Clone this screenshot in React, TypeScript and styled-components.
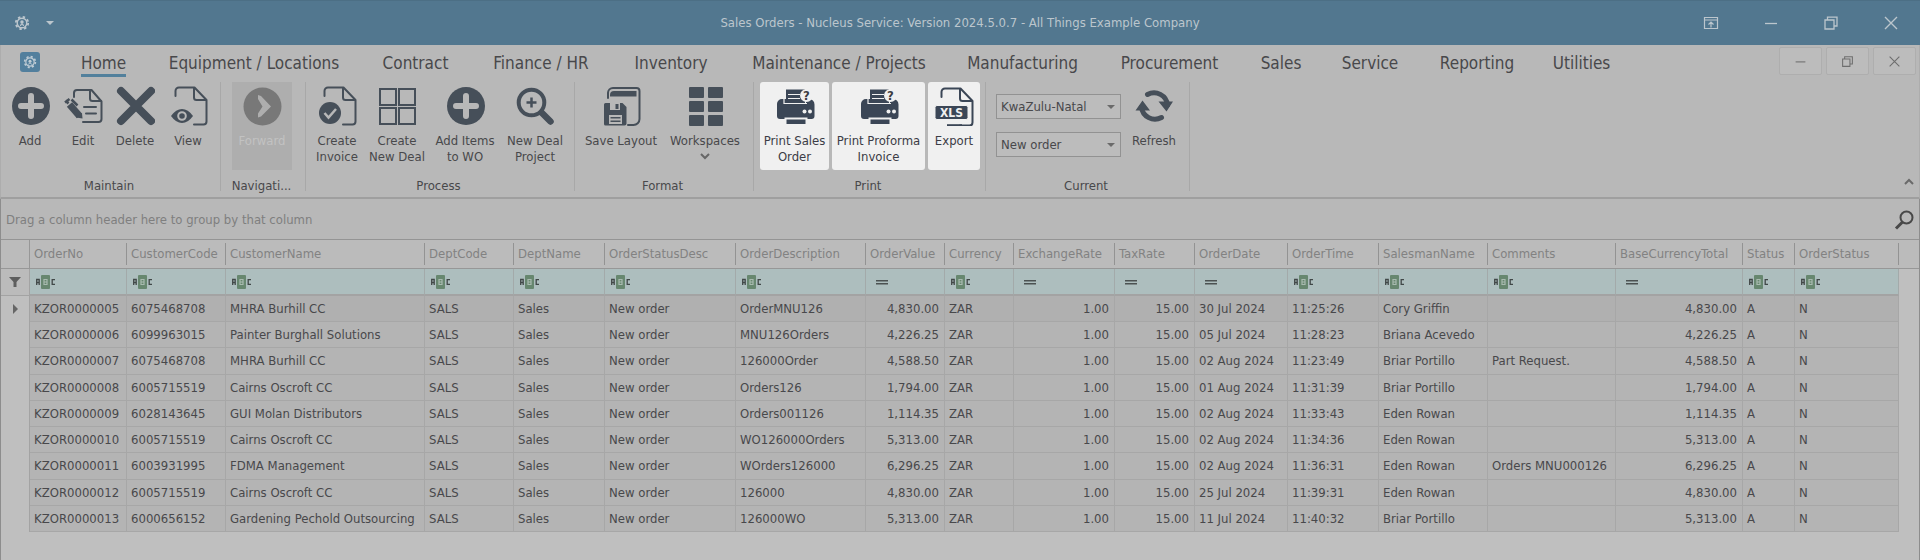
import React from "react";
import styled, { createGlobalStyle, css } from "styled-components";

const INK = "#464f59";
const INK_BRIGHT = "#3b4656";

const GlobalStyle = createGlobalStyle`
  * { box-sizing: border-box; }
  body {
    margin: 0;
    background: #b8b8b8;
    color: #48484b;
    font-family: "DejaVu Sans Condensed", "DejaVu Sans", sans-serif;
    font-size: 13px;
    line-height: 16px;
  }
  button, select, input { font: inherit; color: inherit; }
  button { background: none; border: 0; padding: 0; }
  svg { display: block; flex: none; }
`;

const Window = styled.div`
  min-height: 100vh;
  display: flex;
  flex-direction: column;
`;

/* ---------- title bar ---------- */

const TitleBar = styled.header`
  display: grid;
  grid-template-columns: 1fr auto 1fr;
  align-items: center;
  height: 45px;
  padding: 0 1px;
  background: #52778f;
  border-top: 1px solid #4c6f85;
  color: #bcc6cd;
`;

const QuickAccess = styled.div`
  display: flex;
  align-items: center;
  gap: 16px;
  padding-left: 13px;
`;

const WindowTitle = styled.h1`
  margin: 0;
  font-size: 13px;
  font-weight: 400;
`;

const WindowControls = styled.div`
  display: flex;
  justify-content: flex-end;
  gap: 4px;
`;

const CaptionButton = styled.button`
  display: grid;
  place-items: center;
  width: 56px;
  height: 44px;
`;

const PlainButton = styled.button`
  display: grid;
  place-items: center;
`;

/* ---------- ribbon ---------- */

const Ribbon = styled.section`
  border-left: 1px solid #adadad;
  border-right: 1px solid #adadad;
  border-bottom: 2px solid #9f9f9f;
`;

const TabStrip = styled.nav`
  display: flex;
  align-items: flex-start;
  height: 36px;
  padding: 2px 3px 0 19px;
`;

const AppButton = styled.button`
  display: grid;
  place-items: center;
  width: 20px;
  height: 20px;
  margin: 5px 20px 0 0;
  border-radius: 3px;
  background: #527f9d;
  color: #bfccd5;
`;

const Tab = styled.a<{ $width: number; $active?: boolean }>`
  display: flex;
  justify-content: center;
  width: ${(p) => p.$width}px;
  color: inherit;
  text-decoration: none;
  font-size: 17px;
  line-height: 20px;
  white-space: nowrap;
  padding-top: 6px;

  span {
    padding-bottom: 1px;
    border-bottom: 3px solid ${(p) => (p.$active ? "#52809c" : "transparent")};
  }
`;

const ChildControls = styled.div`
  display: flex;
  gap: 4px;
  margin-left: auto;
`;

const ChildButton = styled.button`
  display: grid;
  place-items: center;
  width: 43px;
  height: 28px;
  background: #bcbcbc;
  border: 1px solid #aeaeae;
  border-radius: 2px;
  color: #6e6e6e;
`;

const Groups = styled.div`
  display: flex;
  height: 116px;
`;

const Group = styled.section<{ $width: number }>`
  display: flex;
  flex-direction: column;
  justify-content: space-between;
  width: ${(p) => p.$width}px;
  height: 109px;
  margin-top: 1px;
  border-right: 1px solid #a8a8a8;
`;

const GroupItems = styled.div<{ $gap?: number; $inset?: number }>`
  display: flex;
  gap: ${(p) => p.$gap ?? 0}px;
  height: 90px;
  padding-left: ${(p) => p.$inset ?? 2}px;
`;

const GroupCaption = styled.h2`
  margin: 0 0 -4px;
  padding-right: 3px;
  font-size: 13px;
  font-weight: 400;
  line-height: 18px;
  text-align: center;
`;

const ToolButton = styled.button<{ $width: number; $tone?: "lit" | "off" }>`
  display: flex;
  flex-direction: column;
  align-items: center;
  gap: 7px;
  width: ${(p) => p.$width}px;
  height: 88px;
  padding-top: 4px;
  border-radius: 3px;
  color: #48484b;
  white-space: nowrap;

  svg { color: ${INK}; }

  ${(p) =>
    p.$tone === "lit" &&
    css`
      background: #f0f0f0;
      color: #3c3c46;
      svg { color: ${INK_BRIGHT}; }
    `}
  ${(p) =>
    p.$tone === "off" &&
    css`
      background: #aeaeae;
      border-radius: 0;
      color: #c2c2c2;
      svg { color: #787878; }
    `}
`;

const ToolLabel = styled.span`
  display: block;
  text-align: center;
  white-space: pre-line;

  svg { margin: 4px auto 0; color: #666; }
`;

const ComboStack = styled.div`
  display: flex;
  flex-direction: column;
  gap: 13px;
  width: 125px;
  padding-top: 12px;
`;

const ComboBox = styled.label`
  position: relative;
  display: block;

  select {
    appearance: none;
    width: 100%;
    height: 25px;
    padding: 1px 20px 0 4px;
    background: #bcbcbc;
    border: 1px solid #929292;
    border-radius: 0;
  }

  svg {
    position: absolute;
    right: 6px;
    top: 11px;
    color: #6a6a6a;
    pointer-events: none;
  }
`;

const CollapseButton = styled.button`
  align-self: flex-end;
  margin: 0 5px 12px auto;
  color: #6a6a6a;
`;

/* ---------- grid ---------- */

const GridPane = styled.main`
  flex: 1;
  border-left: 1px solid #8d8d8d;
  border-right: 1px solid #8d8d8d;
  display: flex;
  flex-direction: column;
  background: #bfbfbf;
`;

const GroupPanel = styled.div`
  display: flex;
  align-items: center;
  justify-content: space-between;
  height: 41px;
  padding: 1px 5px 0;
  background: #b8b8b8;
  border-bottom: 1px solid #949494;
  color: #7f7f7f;
`;

const OrdersTable = styled.table`
  width: 100%;
  table-layout: fixed;
  border-collapse: separate;
  border-spacing: 0;
`;

const HeadRow = styled.tr`
  height: 29px;
  background: #bbbbbb;
  color: #828282;
`;

const HeadCell = styled.th`
  padding: 0;
  border-bottom: 1px solid #979797;
  font-weight: 400;
  text-align: left;
  white-space: nowrap;

  span {
    display: block;
    height: 22px;
    padding-left: 4px;
    border-right: 1px solid #939393;
    line-height: 22px;
  }
`;

const CornerCell = styled.td`
  padding: 0;
  border-right: 1px solid #979797;
  border-bottom: 1px solid #979797;
`;

const FillerCell = styled.td<{ $line?: boolean }>`
  padding: 0;
  background: #bfbfbf;
  ${(p) => p.$line && "background: #bbbbbb; border-bottom: 1px solid #979797;"}
`;

const FilterRow = styled.tr`
  height: 27px;
  background: #adbebe;
`;

const FilterCell = styled.td`
  padding: 0;
  border-right: 1px solid #a3aaaa;
  border-bottom: 2px solid #a3a3a3;
`;

const FilterBox = styled.label`
  display: flex;
  align-items: center;
  gap: 4px;
  padding-left: 5px;

  input {
    flex: 1;
    min-width: 0;
    height: 18px;
    padding: 0;
    background: transparent;
    border: 0;
    outline: 0;
  }
`;

const IndicatorCell = styled.td`
  padding: 0;
  background: #bfbfbf;
  border-right: 1px solid #a3a3a3;

  svg { margin: 0 auto; }

  ${FilterRow} & {
    background: #bbbbbb;
    border-bottom: 1px solid #a3a3a3;
  }
`;

const DataRow = styled.tr`
  height: 26px;

  &:nth-child(4n + 3) { height: 27px; }
  &:first-child td:not(:first-child):not(:last-child) { background: #b0b0b0; }
`;

const DataCell = styled.td<{ $right?: boolean }>`
  padding: 0 5px 0 4px;
  background: #b4b4b4;
  border-right: 1px solid #a7a7a7;
  border-bottom: 1px solid #a7a7a7;
  text-align: ${(p) => (p.$right ? "right" : "left")};
  white-space: nowrap;
`;

/* ---------- icons ---------- */

const Icon = ({ children, size = 40 }: { children: React.ReactNode; size?: number }) => (
  <svg width={size} height={size} viewBox={`0 0 ${size} ${size}`} fill="none" aria-hidden="true">
    {children}
  </svg>
);

const line = {
  stroke: "currentColor",
  strokeWidth: 2,
  strokeLinecap: "round" as const,
  strokeLinejoin: "round" as const,
};

const PageOutline = () => (
  <g {...line}>
    <path d="M7.500 10V5a3.500 3.500 0 0 1 3.500-3.500h15.500L38.500 14v21.500a3 3 0 0 1-3 3H26" />
    <path d="M26 2v9.500a2.500 2.500 0 0 0 2.500 2.500H38" />
  </g>
);

const AddIcon = () => (
  <Icon>
    <circle cx="21" cy="20" r="19" fill="currentColor" />
    <path d="M21 10v20M11 20h20" stroke="#b8b8b8" strokeWidth="6" strokeLinecap="round" />
  </Icon>
);

const EditIcon = () => (
  <Icon>
    <g {...line}>
      <path d="M11 11V7a3 3 0 0 1 3-3h14.500L38.500 15.500V33a3 3 0 0 1-3 3H20" />
      <path d="M27 4v8.500a2.500 2.500 0 0 0 2.500 2.500h8.500M21 21h12M23 27.500h10" />
    </g>
    <path d="M6.500 18.500l10 11.500" stroke="currentColor" strokeWidth="7" />
    <path d="M13 31.500l6-4.500 0.500 5.500z" fill="currentColor" />
    <path d="M2 16.500L6.500 13M8.500 13.500l6 6M2.500 14.500l3 3" stroke="currentColor" strokeWidth="2.500" />
  </Icon>
);

const DeleteIcon = () => (
  <Icon>
    <path d="M6 5L36 35M36 5L6 35" stroke="currentColor" strokeWidth="8" strokeLinecap="round" />
  </Icon>
);

const ViewIcon = () => (
  <Icon>
    <PageOutline />
    <path d="M3 30q5-7 11-7t11 7q-5 7-11 7t-11-7z" fill="currentColor" />
    <circle cx="14" cy="30" r="3.800" stroke="#b8b8b8" strokeWidth="2" />
  </Icon>
);

const ForwardIcon = () => (
  <Icon>
    <circle cx="20.500" cy="20.500" r="19" fill="currentColor" />
    <path d="M16 9l3 1 10 10.500-10 10-3 1v-4l4.500-7-4.500-7.500z" fill="#aeaeae" />
  </Icon>
);

const InvoiceIcon = () => (
  <Icon>
    <PageOutline />
    <circle cx="13" cy="27" r="11" fill="currentColor" />
    <path d="M7.500 27l4 4.500 7.500-8.500" stroke="#b8b8b8" strokeWidth="2.500" />
  </Icon>
);

const NewDealIcon = () => (
  <Icon>
    <g stroke="currentColor" strokeWidth="2">
      <rect x="3" y="3" width="16" height="16" />
      <rect x="22" y="3" width="16" height="16" />
      <rect x="3" y="22" width="16" height="16" />
      <rect x="22" y="22" width="16" height="16" />
    </g>
  </Icon>
);

const DealProjectIcon = () => (
  <Icon>
    <circle cx="16.500" cy="16.500" r="12.800" stroke="currentColor" strokeWidth="4" />
    <path d="M16.500 11.500v10M11.500 16.500h10" stroke="currentColor" strokeWidth="2.500" />
    <path d="M27 27l8.500 8.500" stroke="currentColor" strokeWidth="6.500" strokeLinecap="round" />
  </Icon>
);

const SaveLayoutIcon = () => (
  <Icon>
    <path d="M7 12V7a5 5 0 0 1 5-5h23.500a3 3 0 0 1 3 3v28a6 6 0 0 1-6 6H27" {...line} />
    <path d="M9 9a4 4 0 0 1 4-4h22.500v5.500H9z" fill="currentColor" />
    <path d="M4.500 17h17l4 4v16.500a2 2 0 0 1-2 2h-19a1.500 1.500 0 0 1-1.500-1.500V18.500a1.500 1.500 0 0 1 1.500-1.500z" fill="currentColor" />
    <path d="M9 17h10v7H9zM8 29h13v9H8z" fill="#b8b8b8" />
    <path d="M14.500 18h3v5h-3zM9.500 31h10v1.500h-10zM9.500 34.500h10v1.500h-10z" fill="currentColor" />
  </Icon>
);

const WorkspacesIcon = () => (
  <Icon>
    {[1, 15, 29].map((y) => (
      <g key={y} fill="currentColor">
        <rect x="4" y={y} width="15" height="11" rx="1" />
        <rect x="23" y={y} width="15" height="11" rx="1" />
      </g>
    ))}
  </Icon>
);

const PrinterIcon = () => (
  <Icon>
    <path d="M2 18a5 5 0 0 1 5-5h4v5h20v-5h3a5.500 5.500 0 0 1 5.500 5.500V30a3 3 0 0 1-3 3H5a3 3 0 0 1-3-3z" fill="currentColor" />
    <path d="M11 3.500h19v14H11z" fill="currentColor" />
    <path d="M13 8.500h12M13 12.500h12M9 13v4.500h23" stroke="#f0f0f0" strokeWidth="1.200" />
    <path d="M9.500 31.500h23V40h-23z" fill="#f0f0f0" />
    <path d="M11.500 33.500h19v4.500h-19z" fill="currentColor" />
    <circle cx="31.500" cy="9.500" r="6.500" fill="#f0f0f0" />
    <circle cx="29.500" cy="25.500" r="2" fill="#f0f0f0" />
    <circle cx="35" cy="25.500" r="2" fill="#f0f0f0" />
    <text x="31.500" y="14" textAnchor="middle" fontSize="13" fontWeight="700" fill="#3c3c40">?</text>
  </Icon>
);

const ExportIcon = () => (
  <Icon>
    <g transform="translate(0 1)">
      <PageOutline />
    </g>
    <path d="M0 31h15v9H0z" fill="#f0f0f0" />
    <path d="M13 39.200h15" stroke="currentColor" strokeWidth="2" />
    <rect x="1" y="19.500" width="33" height="14" rx="2" fill="currentColor" stroke="#f0f0f0" />
    <text x="17.500" y="31" textAnchor="middle" fontSize="12" fontWeight="700" fill="#f0f0f0">XLS</text>
  </Icon>
);

const RefreshIcon = () => (
  <Icon>
    <g stroke="currentColor" strokeWidth="5" strokeLinecap="round">
      <path d="M13.500 8.500A13.500 13.500 0 0 1 33.500 19" />
      <path d="M27.500 31.500A13.500 13.500 0 0 1 7.500 21" />
    </g>
    <path d="M24.500 15.500h14.500l-6.500 10zM1.500 24.500h14.500L8.500 14.500z" fill="currentColor" />
  </Icon>
);

const GearIcon = ({ size = 14 }: { size?: number }) => (
  <svg width={size} height={size} viewBox="0 0 14 14" fill="none" aria-hidden="true">
    <circle cx="7" cy="7" r="5.400" stroke="currentColor" strokeWidth="1.600" strokeDasharray="2.120 2.120" />
    <circle cx="7" cy="7" r="4.200" stroke="currentColor" strokeWidth="1.200" />
    <path d="M5.500 9.500l1-1.500h1l1 1.500" stroke="currentColor" />
    <circle cx="7" cy="6.200" r="1.500" fill="currentColor" />
  </svg>
);

const CaretIcon = () => (
  <svg width="8" height="4" viewBox="0 0 8 4" aria-hidden="true">
    <path d="M0 0h8L4 4z" fill="currentColor" />
  </svg>
);

const ChevronIcon = ({ up }: { up?: boolean }) => (
  <svg width="10" height="7" viewBox="0 0 10 7" fill="none" aria-hidden="true">
    <path d={up ? "M1 6l4-4 4 4" : "M1 1l4 4 4-4"} stroke="currentColor" strokeWidth="2" />
  </svg>
);

const PinWindowIcon = () => (
  <Icon size={16}>
    <path d="M1.500 2.500h13v11h-13zM1.500 5h13M8 12.500V7.500M5.500 9.500L8 7l2.500 2.500" stroke="currentColor" strokeWidth="1.200" />
  </Icon>
);

const MinimizeIcon = ({ size = 16 }: { size?: number }) => (
  <svg width={size} height={size} viewBox="0 0 16 16" fill="none" aria-hidden="true">
    <path d="M2 8.500h12" stroke="currentColor" strokeWidth="1.300" />
  </svg>
);

const RestoreIcon = ({ size = 16 }: { size?: number }) => (
  <svg width={size} height={size} viewBox="0 0 16 16" fill="none" aria-hidden="true">
    <path d="M2 5h9v9H2zM4.500 4.500V2.200H14V11h-2.500" stroke="currentColor" strokeWidth="1.300" />
  </svg>
);

const CloseIcon = ({ size = 16 }: { size?: number }) => (
  <svg width={size} height={size} viewBox="0 0 16 16" fill="none" aria-hidden="true">
    <path d="M2 2l12 12M14 2L2 14" stroke="currentColor" strokeWidth="1.400" />
  </svg>
);

const SearchIcon = () => (
  <Icon size={20}>
    <circle cx="12.500" cy="7.500" r="6" stroke="#484848" strokeWidth="2" />
    <path d="M8.500 12L2 18.500" stroke="#484848" strokeWidth="3" />
  </Icon>
);

const FunnelIcon = () => (
  <svg width="12" height="10" viewBox="0 0 12 10" aria-hidden="true">
    <path d="M0 0h12L7.500 5v5h-3V5z" fill="#5e5e5e" />
  </svg>
);

const RowPointerIcon = () => (
  <svg width="5" height="10" viewBox="0 0 5 10" aria-hidden="true">
    <path d="M0 0l5 5-5 5z" fill="#666" />
  </svg>
);

const ContainsIcon = () => (
  <svg width="21" height="14" viewBox="0 0 21 14" fill="none" aria-hidden="true">
    <rect x="6" width="9" height="14" rx="1" fill="#67876f" />
    <g stroke="#414848" strokeWidth="1.300">
      <path d="M1.700 10V4.500h2.500V10M1.700 7.500h2.500" />
      <path d="M20 4.600h-2.800v4.800H20" />
    </g>
    <path d="M9 4.500h3v5H9zM9 7h3" stroke="#a9bbb0" strokeWidth="1.200" />
  </svg>
);

const EqualsIcon = () => (
  <svg width="21" height="14" viewBox="0 0 21 14" aria-hidden="true">
    <path d="M5 5h12v1.500H5zM5 8h12v1.500H5z" fill="#4c5252" />
  </svg>
);

/* ---------- data ---------- */

const tabs: [string, number][] = [
  ["Home", 87],
  ["Equipment / Locations", 214],
  ["Contract", 109],
  ["Finance / HR", 142],
  ["Inventory", 118],
  ["Maintenance / Projects", 218],
  ["Manufacturing", 149],
  ["Procurement", 145],
  ["Sales", 78],
  ["Service", 100],
  ["Reporting", 114],
  ["Utilities", 95],
];

type Column = { name: string; width: number; right?: boolean; equals?: boolean };

const columns: Column[] = [
  { name: "OrderNo", width: 97 },
  { name: "CustomerCode", width: 99 },
  { name: "CustomerName", width: 199 },
  { name: "DeptCode", width: 89 },
  { name: "DeptName", width: 91 },
  { name: "OrderStatusDesc", width: 131 },
  { name: "OrderDescription", width: 130 },
  { name: "OrderValue", width: 79, right: true, equals: true },
  { name: "Currency", width: 69 },
  { name: "ExchangeRate", width: 101, right: true, equals: true },
  { name: "TaxRate", width: 80, right: true, equals: true },
  { name: "OrderDate", width: 93, equals: true },
  { name: "OrderTime", width: 91 },
  { name: "SalesmanName", width: 109 },
  { name: "Comments", width: 128 },
  { name: "BaseCurrencyTotal", width: 127, right: true, equals: true },
  { name: "Status", width: 52 },
  { name: "OrderStatus", width: 104 },
];

const orders = [
  ["KZOR0000005", "6075468708", "MHRA Burhill CC", "OrderMNU126", "4,830.00", "30 Jul 2024", "11:25:26", "Cory Griffin", ""],
  ["KZOR0000006", "6099963015", "Painter Burghall Solutions", "MNU126Orders", "4,226.25", "05 Jul 2024", "11:28:23", "Briana Acevedo", ""],
  ["KZOR0000007", "6075468708", "MHRA Burhill CC", "126000Order", "4,588.50", "02 Aug 2024", "11:23:49", "Briar Portillo", "Part Request."],
  ["KZOR0000008", "6005715519", "Cairns Oscroft CC", "Orders126", "1,794.00", "01 Aug 2024", "11:31:39", "Briar Portillo", ""],
  ["KZOR0000009", "6028143645", "GUI Molan Distributors", "Orders001126", "1,114.35", "02 Aug 2024", "11:33:43", "Eden Rowan", ""],
  ["KZOR0000010", "6005715519", "Cairns Oscroft CC", "WO126000Orders", "5,313.00", "02 Aug 2024", "11:34:36", "Eden Rowan", ""],
  ["KZOR0000011", "6003931995", "FDMA Management", "WOrders126000", "6,296.25", "02 Aug 2024", "11:36:31", "Eden Rowan", "Orders MNU000126"],
  ["KZOR0000012", "6005715519", "Cairns Oscroft CC", "126000", "4,830.00", "25 Jul 2024", "11:39:31", "Eden Rowan", ""],
  ["KZOR0000013", "6000656152", "Gardening Pechold Outsourcing", "126000WO", "5,313.00", "11 Jul 2024", "11:40:32", "Briar Portillo", ""],
].map(([no, code, customer, description, value, date, time, salesman, comments]) => [
  no, code, customer, "SALS", "Sales", "New order", description, value, "ZAR",
  "1.00", "15.00", date, time, salesman, comments, value, "A", "N",
]);

type ToolProps = {
  label: string;
  width: number;
  icon: React.ReactNode;
  tone?: "lit" | "off";
  menu?: boolean;
};

const Tool = ({ label, width, icon, tone, menu }: ToolProps) => (
  <ToolButton type="button" $width={width} $tone={tone} disabled={tone === "off"}>
    {icon}
    <ToolLabel>
      {label}
      {menu && <ChevronIcon />}
    </ToolLabel>
  </ToolButton>
);

const Combo = ({ label, options }: { label: string; options: string[] }) => (
  <ComboBox>
    <select aria-label={label} defaultValue={options[0]}>
      {options.map((option) => (
        <option key={option}>{option}</option>
      ))}
    </select>
    <CaretIcon />
  </ComboBox>
);

export default function App() {
  return (
    <Window>
      <GlobalStyle />
      <TitleBar>
        <QuickAccess>
          <PlainButton type="button" aria-label="Application menu"><GearIcon size={16} /></PlainButton>
          <PlainButton type="button" aria-label="Customize quick access"><CaretIcon /></PlainButton>
        </QuickAccess>
        <WindowTitle>Sales Orders - Nucleus Service: Version 2024.5.0.7 - All Things Example Company</WindowTitle>
        <WindowControls>
          <CaptionButton type="button" aria-label="Ribbon display"><PinWindowIcon /></CaptionButton>
          <CaptionButton type="button" aria-label="Minimize"><MinimizeIcon /></CaptionButton>
          <CaptionButton type="button" aria-label="Restore"><RestoreIcon /></CaptionButton>
          <CaptionButton type="button" aria-label="Close"><CloseIcon /></CaptionButton>
        </WindowControls>
      </TitleBar>

      <Ribbon>
        <TabStrip>
          <AppButton type="button" aria-label="Application"><GearIcon /></AppButton>
          {tabs.map(([name, width], i) => (
            <Tab key={name} href="#" $width={width} $active={i === 0}>
              <span>{name}</span>
            </Tab>
          ))}
          <ChildControls>
            <ChildButton type="button" aria-label="Minimize child"><MinimizeIcon size={13} /></ChildButton>
            <ChildButton type="button" aria-label="Restore child"><RestoreIcon size={13} /></ChildButton>
            <ChildButton type="button" aria-label="Close child"><CloseIcon size={13} /></ChildButton>
          </ChildControls>
        </TabStrip>
        <Groups>
          <Group $width={220}>
            <GroupItems>
              <Tool label="Add" width={54} icon={<AddIcon />} />
              <Tool label="Edit" width={52} icon={<EditIcon />} />
              <Tool label="Delete" width={52} icon={<DeleteIcon />} />
              <Tool label="View" width={54} icon={<ViewIcon />} />
            </GroupItems>
            <GroupCaption>Maintain</GroupCaption>
          </Group>
          <Group $width={85}>
            <GroupItems $inset={11}>
              <Tool label="Forward" width={60} icon={<ForwardIcon />} tone="off" />
            </GroupItems>
            <GroupCaption>Navigati...</GroupCaption>
          </Group>
          <Group $width={269}>
            <GroupItems>
              <Tool label={"Create\nInvoice"} width={58} icon={<InvoiceIcon />} />
              <Tool label={"Create\nNew Deal"} width={62} icon={<NewDealIcon />} />
              <Tool label={"Add Items\nto WO"} width={74} icon={<AddIcon />} />
              <Tool label={"New Deal\nProject"} width={66} icon={<DealProjectIcon />} />
            </GroupItems>
            <GroupCaption>Process</GroupCaption>
          </Group>
          <Group $width={179}>
            <GroupItems>
              <Tool label="Save Layout" width={88} icon={<SaveLayoutIcon />} />
              <Tool label="Workspaces" width={80} icon={<WorkspacesIcon />} menu />
            </GroupItems>
            <GroupCaption>Format</GroupCaption>
          </Group>
          <Group $width={232}>
            <GroupItems $gap={3} $inset={6}>
              <Tool label={"Print Sales\nOrder"} width={69} icon={<PrinterIcon />} tone="lit" />
              <Tool label={"Print Proforma\nInvoice"} width={93} icon={<PrinterIcon />} tone="lit" />
              <Tool label="Export" width={52} icon={<ExportIcon />} tone="lit" />
            </GroupItems>
            <GroupCaption>Print</GroupCaption>
          </Group>
          <Group $width={204}>
            <GroupItems $gap={3} $inset={10}>
              <ComboStack>
                <Combo label="Region" options={["KwaZulu-Natal"]} />
                <Combo label="Order status" options={["New order"]} />
              </ComboStack>
              <Tool label="Refresh" width={60} icon={<RefreshIcon />} />
            </GroupItems>
            <GroupCaption>Current</GroupCaption>
          </Group>
          <CollapseButton type="button" aria-label="Collapse ribbon"><ChevronIcon up /></CollapseButton>
        </Groups>
      </Ribbon>

      <GridPane>
        <GroupPanel>
          Drag a column header here to group by that column
          <PlainButton type="button" aria-label="Search"><SearchIcon /></PlainButton>
        </GroupPanel>
        <OrdersTable>
          <colgroup>
            <col width={29} />
            {columns.map((c) => (
              <col key={c.name} width={c.width} />
            ))}
            <col />
          </colgroup>
          <thead>
            <HeadRow>
              <CornerCell />
              {columns.map((c) => (
                <HeadCell key={c.name} scope="col"><span>{c.name}</span></HeadCell>
              ))}
              <FillerCell $line />
            </HeadRow>
            <FilterRow>
              <IndicatorCell><FunnelIcon /></IndicatorCell>
              {columns.map((c) => (
                <FilterCell key={c.name}>
                  <FilterBox>
                    {c.equals ? <EqualsIcon /> : <ContainsIcon />}
                    <input type="text" aria-label={`Filter ${c.name}`} />
                  </FilterBox>
                </FilterCell>
              ))}
              <FillerCell />
            </FilterRow>
          </thead>
          <tbody>
            {orders.map((cells, r) => (
              <DataRow key={cells[0]}>
                <IndicatorCell>{r === 0 && <RowPointerIcon />}</IndicatorCell>
                {cells.map((value, i) => (
                  <DataCell key={columns[i].name} $right={columns[i].right}>{value}</DataCell>
                ))}
                <FillerCell />
              </DataRow>
            ))}
          </tbody>
        </OrdersTable>
      </GridPane>
    </Window>
  );
}
